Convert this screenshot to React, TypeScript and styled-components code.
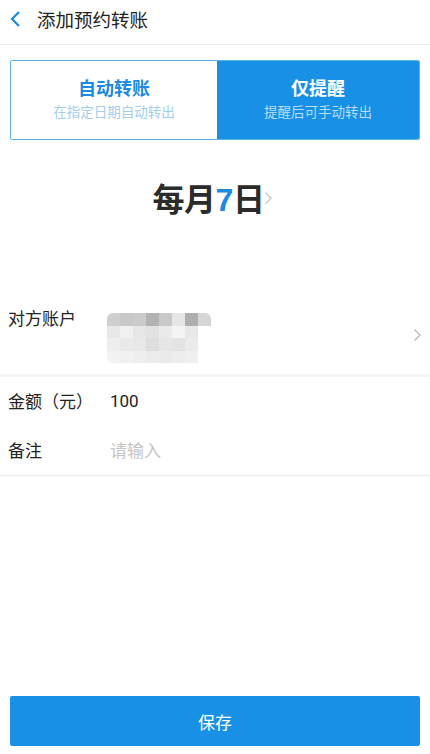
import React from 'react';
import styled, { createGlobalStyle } from 'styled-components';

const GlobalStyle = createGlobalStyle`
  html, body {
    margin: 0;
    padding: 0;
    background: #fff;
  }
  body {
    font-family: "Noto Sans CJK SC", "Noto Sans", sans-serif;
    color: #222;
  }
`;

const Page = styled.div`
  width: 430px;
  min-height: 754px;
  display: flex;
  flex-direction: column;
  box-sizing: border-box;
  background: #fff;
`;

const Header = styled.div`
  height: 44px;
  display: flex;
  align-items: center;
  border-bottom: 1px solid #ebebeb;
  padding-left: 9px;
  gap: 14px;
`;

const HeaderTitle = styled.div`
  font-size: 18.5px;
  color: #222;
  line-height: 24px;
  margin-top: -6px;
`;

const BackIcon = styled.svg`
  width: 14px;
  height: 18px;
  margin-top: -6px;
`;

const Segment = styled.div`
  margin: 15px 10px 0;
  height: 78px;
  display: grid;
  grid-template-columns: 206px 1fr;
  border: 1px solid #5eb2ea;
  border-radius: 2px;
  overflow: hidden;
`;

const SegItem = styled.div<{ $active?: boolean }>`
  background: ${p => (p.$active ? '#1790e6' : '#fff')};
  display: flex;
  flex-direction: column;
  align-items: center;
  justify-content: center;
  gap: 3px;
  padding-bottom: 6px;
`;

const SegTitle = styled.div<{ $active?: boolean }>`
  font-size: 18px;
  font-weight: 700;
  line-height: 24px;
  color: ${p => (p.$active ? '#fff' : '#1a8ae2')};
`;

const SegSub = styled.div<{ $active?: boolean }>`
  font-size: 13.5px;
  line-height: 18px;
  color: ${p => (p.$active ? '#b9dcf7' : '#a3cdee')};
`;

const DateLine = styled.div`
  margin-top: 37px;
  display: flex;
  justify-content: center;
  align-items: center;
  padding-right: 4px;
`;

const DateText = styled.div`
  font-size: 32px;
  font-weight: 700;
  line-height: 40px;
  color: #2b2b2b;
  letter-spacing: -0.5px;
`;

const Day = styled.span`
  color: #1a8ae2;
  font-family: "Liberation Sans", sans-serif;
`;

const Chevron = styled.svg<{ $size?: number }>`
  width: ${p => p.$size || 9}px;
  height: ${p => (p.$size || 9) * 1.6}px;
`;

const Rows = styled.div`
  margin-top: 76px;
`;

const Row = styled.div<{ $h: number; $top?: boolean; $border?: boolean }>`
  height: ${p => p.$h}px;
  display: flex;
  align-items: ${p => (p.$top ? 'flex-start' : 'center')};
  padding: ${p => (p.$top ? '10px 0 0 8px' : '0 0 0 8px')};
  box-sizing: border-box;
  border-bottom: ${p => (p.$border ? '3px solid #f5f5f5' : 'none')};
  position: relative;
`;

const Label = styled.div`
  width: 102px;
  font-size: 17px;
  line-height: 24px;
  color: #222;
  flex-shrink: 0;
`;

const Value = styled.div<{ $muted?: boolean }>`
  font-size: 17px;
  line-height: 24px;
  color: ${p => (p.$muted ? '#c4c4c4' : '#222')};
  font-family: ${p => (p.$muted ? 'inherit' : '"Roboto", "Noto Sans CJK SC", sans-serif')};
`;

const Mosaic = styled.div`
  margin: 7px 0 0 -3px;
  display: grid;
  grid-template-columns: repeat(8, 13px);
  grid-auto-rows: 12.5px;
  border-radius: 6px;
  overflow: hidden;
`;

const Cell = styled.div<{ $c: string }>`
  background: ${p => p.$c};
`;

const RightArrow = styled.div`
  position: absolute;
  right: 8px;
  top: 50%;
  transform: translateY(-50%);
  display: flex;
`;

const SaveButton = styled.button`
  margin: auto 10px 8px;
  height: 50px;
  border: none;
  border-radius: 2px;
  background: #1790e6;
  color: #fff;
  font-size: 17px;
  font-family: "Noto Sans CJK SC", sans-serif;
  display: flex;
  align-items: center;
  justify-content: center;
`;

const mosaic = [
  '#cfcfcf', '#c8c8c8', '#cbcbcb', '#b3b3b3', '#c9c9c9', '#e6e6e6', '#aeaeae', '#d6d6d6',
  '#e8e8e8', '#f0f0f0', '#e6e6e6', '#e2e2e2', '#eaeaea', '#f4f4f4', '#e8e8e8', '#ffffff',
  '#eeeeee', '#e9e9e9', '#e8e8e8', '#dedede', '#e6e6e6', '#e3e3e3', '#ebebeb', '#ffffff',
  '#f2f2f2', '#f1f1f1', '#eeeeee', '#ebebeb', '#eaeaea', '#ededed', '#f0f0f0', '#ffffff',
];

export default function App() {
  return (
    <Page>
      <GlobalStyle />
      <Header>
        <BackIcon viewBox="0 0 14 18">
          <path d="M10 2 L3 9 L10 16" fill="none" stroke="#1a8ae2" strokeWidth="2.2" />
        </BackIcon>
        <HeaderTitle>添加预约转账</HeaderTitle>
      </Header>

      <Segment>
        <SegItem>
          <SegTitle>自动转账</SegTitle>
          <SegSub>在指定日期自动转出</SegSub>
        </SegItem>
        <SegItem $active>
          <SegTitle $active>仅提醒</SegTitle>
          <SegSub $active>提醒后可手动转出</SegSub>
        </SegItem>
      </Segment>

      <DateLine>
        <DateText>
          每月<Day>7</Day>日
        </DateText>
        <Chevron $size={9} viewBox="0 0 9 14">
          <path d="M1.5 1.5 L7 7 L1.5 12.5" fill="none" stroke="#c8c8c8" strokeWidth="1.3" />
        </Chevron>
      </DateLine>

      <Rows>
        <Row $h={81} $top $border>
          <Label>对方账户</Label>
          <Mosaic>
            {mosaic.map((c, i) => (
              <Cell key={i} $c={c} />
            ))}
          </Mosaic>
          <RightArrow>
            <Chevron $size={9} viewBox="0 0 9 14">
              <path d="M1.5 1.5 L7 7 L1.5 12.5" fill="none" stroke="#b8b8b8" strokeWidth="1.3" />
            </Chevron>
          </RightArrow>
        </Row>
        <Row $h={48}>
          <Label>金额（元）</Label>
          <Value>100</Value>
        </Row>
        <Row $h={52} $border>
          <Label>备注</Label>
          <Value $muted>请输入</Value>
        </Row>
      </Rows>

      <SaveButton>保存</SaveButton>
    </Page>
  );
}
